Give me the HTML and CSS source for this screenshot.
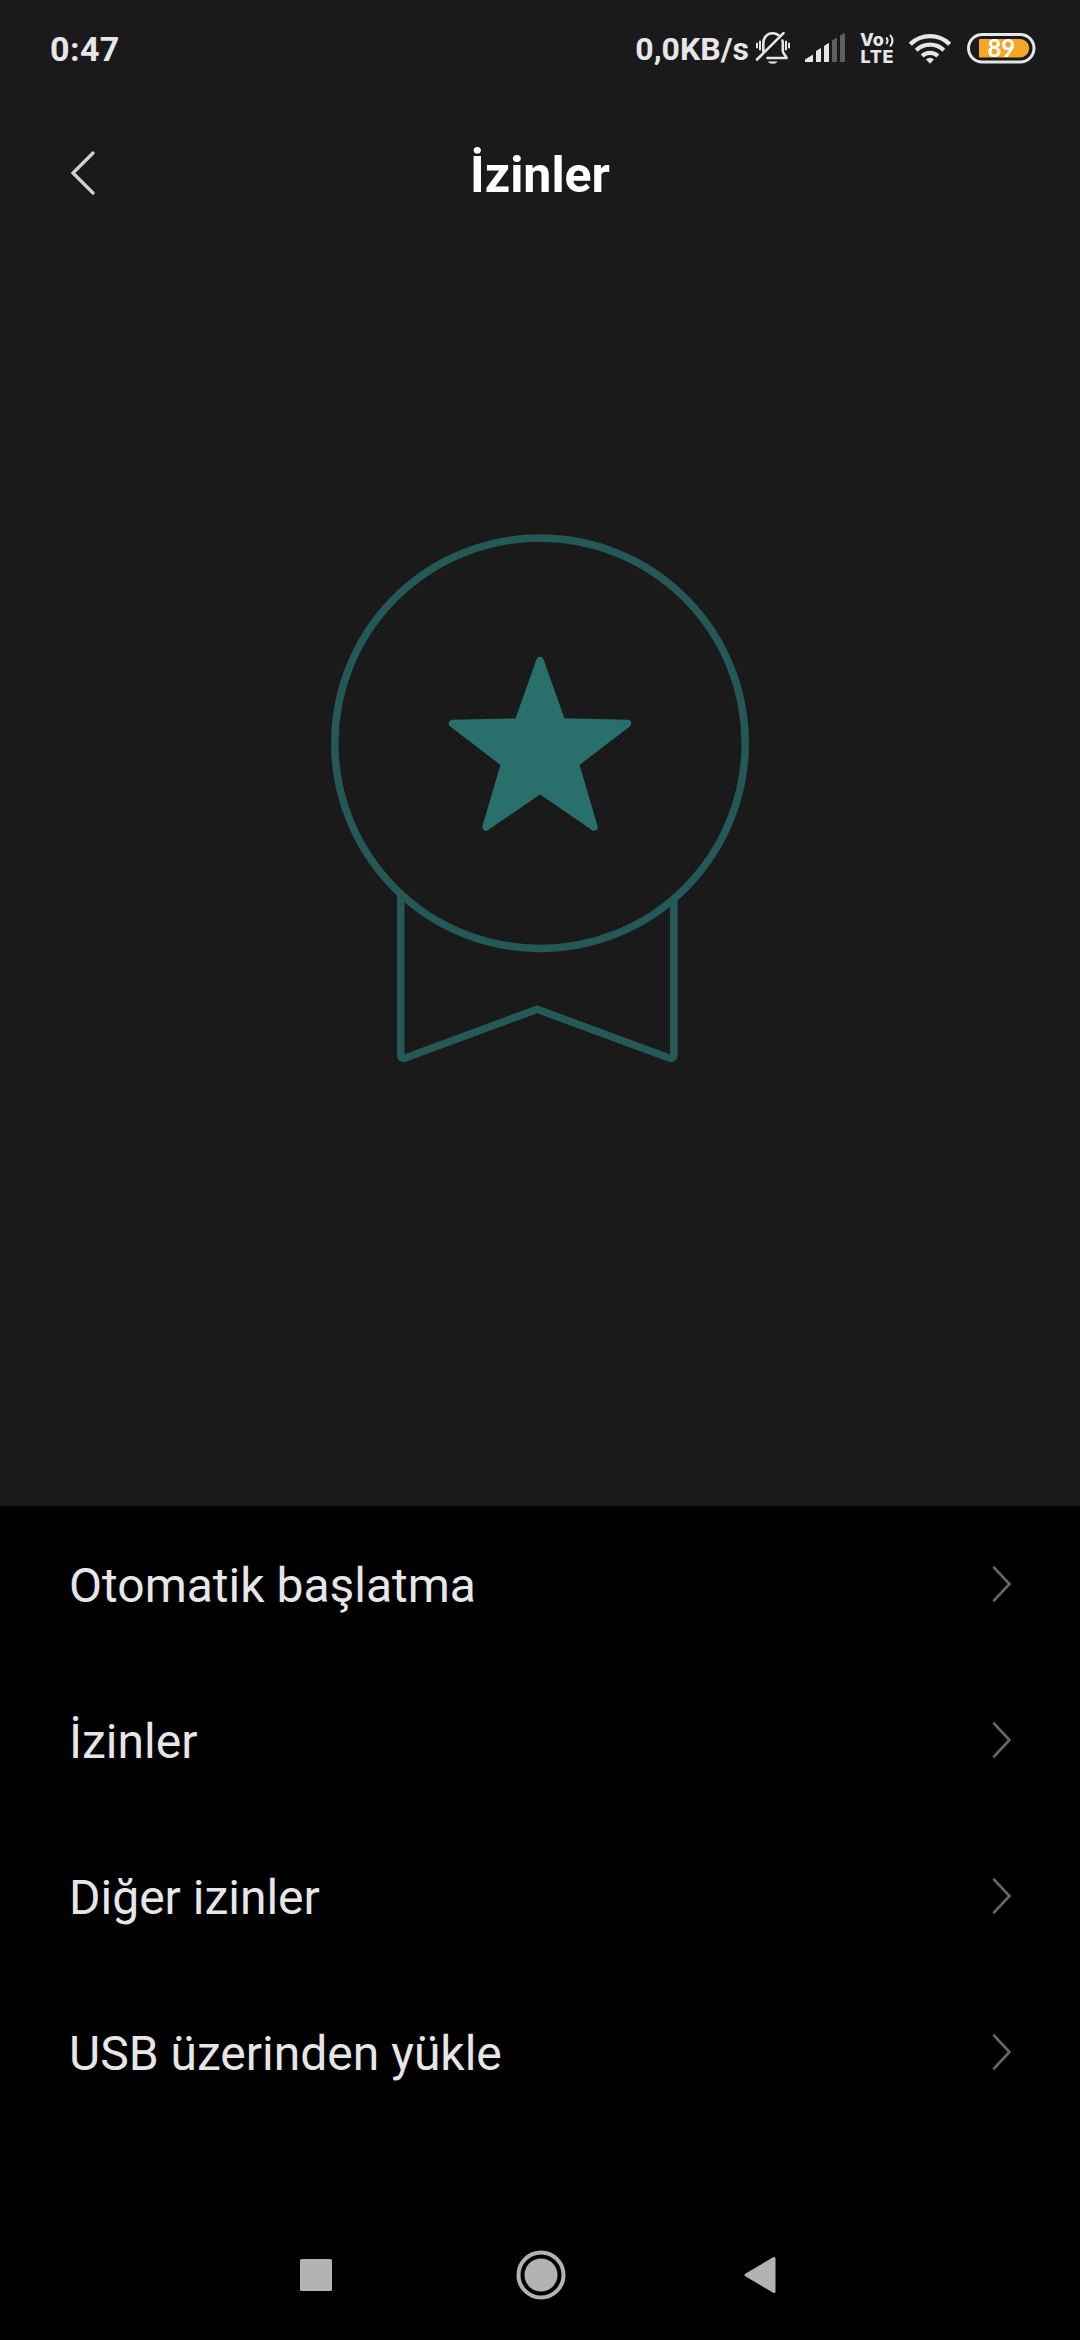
FILE: index.html
```html
<!DOCTYPE html>
<html lang="tr">
<head>
<meta charset="utf-8">
<title>İzinler</title>
<link rel="stylesheet" href="styles.css">
</head>
<body>
<div class="status">
  <span class="clock">0:47</span>
  <div class="indicators">
    <span class="speed">0,0KB/s</span>
    <svg class="bell" width="36" height="34" viewBox="0 0 36 34" fill="none" stroke="#e6e6e6" stroke-width="2.600" stroke-linecap="round" stroke-linejoin="round">
      <path d="M8.300 20V12.500C8.300 6.500 12 2.200 17.600 2.200c2.400 0 4.400.700 6 2M27.400 9.500c.3 1 .4 2 .4 3v7.500c0 2.400 2.800 4.500 3.800 7H12.500"/>
      <path d="M2 28.500 28.500 2.200"/>
      <path d="M2 12.500v4M5 10.500v8M31 10.500v8M34 12.500v4" stroke-width="2"/>
      <path d="M13 30.500h9.500c-1.200 3-8.300 3-9.500 0z" fill="#e6e6e6" stroke="none"/>
    </svg>
    <svg class="signal" width="41" height="30" viewBox="0 0 41 30">
      <g fill="#e6e6e6"><path d="M0 29v-2.500L8 21.500V29zM11 29V18l5-3v14zM19 29V13l5-3.200V29z"/></g>
      <g fill="#5f5f5f"><path d="M27 29V7.500l5-3V29zM35 29V2.500l5-2.500v29z"/></g>
    </svg>
    <svg class="volte" width="36" height="40" viewBox="0 -5 36 40">
      <text x="0" y="13.300" class="volte-text" textLength="24">Vo</text>
      <text x="0.500" y="30.300" class="volte-text" textLength="33">LTE</text>
      <path d="M26.700 5q1.700 2.700 0 5.300M30.500 2.500q4 5 0 10.300" fill="none" stroke="#e6e6e6" stroke-width="2" stroke-linecap="round"/>
    </svg>
    <svg class="wifi" width="42" height="31" viewBox="0 0 42 31" fill="none" stroke="#e6e6e6" stroke-width="4.200">
      <path d="M1.300 11.200a28 28 0 0 1 39.400 0M7.200 17.200a20 20 0 0 1 27.600 0M13.200 23a11.500 11.500 0 0 1 15.600 0"/>
      <path d="M17 26.500q4-3.500 8 0l-4 4.200z" fill="#e6e6e6" stroke="none"/>
    </svg>
    <svg class="battery" width="69" height="31" viewBox="0 0 69 31">
      <rect x="1.500" y="1.500" width="65.500" height="27.500" rx="13.750" fill="none" stroke="#e6e6e6" stroke-width="3"/>
      <path d="M13 6h40a9.200 9.200 0 0 1 0 18.500H13a1 1 0 0 1-1-1V7a1 1 0 0 1 1-1z" fill="#f5a623"/>
      <text x="34.300" y="24" text-anchor="middle" class="battery-text">89</text>
    </svg>
  </div>
</div>
<header class="header">
  <svg class="back" width="26" height="46" viewBox="0 0 26 46"><path d="M23 3 3 23l20 20" fill="none" stroke="#d0d0d0" stroke-width="3.300" stroke-linecap="round"/></svg>
  <h1 class="title">İzinler</h1>
</header>
<section class="hero">
  <svg width="420" height="530" viewBox="330 533 420 530">
    <g fill="none" stroke="#245957" stroke-width="7.500" stroke-linejoin="round">
      <circle cx="540" cy="743.200" r="205.200"/>
      <path d="M400.700 895v160q0 4.500 4.500 3L537.200 1009.300 669.300 1058q4.500 1.500 4.500-3V900"/>
    </g>
    <path d="M540 660.500 561.800 722 627.500 723.500 575.300 763.500 594 827 540 790 486 827 504.700 763.500 452.500 723.500 518.200 722z" fill="#29706c" stroke="#29706c" stroke-width="7.400" stroke-linejoin="round"/>
  </svg>
</section>
<main class="list">
  <div class="row"><span>Otomatik başlatma</span><svg class="chevron" width="20" height="38" viewBox="0 0 20 38"><path d="M2 2.500 17.500 19 2 35.500"/></svg></div>
  <div class="row"><span>İzinler</span><svg class="chevron" width="20" height="38" viewBox="0 0 20 38"><path d="M2 2.500 17.500 19 2 35.500"/></svg></div>
  <div class="row"><span>Diğer izinler</span><svg class="chevron" width="20" height="38" viewBox="0 0 20 38"><path d="M2 2.500 17.500 19 2 35.500"/></svg></div>
  <div class="row"><span>USB üzerinden yükle</span><svg class="chevron" width="20" height="38" viewBox="0 0 20 38"><path d="M2 2.500 17.500 19 2 35.500"/></svg></div>
</main>
<nav class="nav">
  <svg width="32" height="32" viewBox="0 0 32 32"><rect width="32" height="32" rx="1.500" fill="#b3b3b3"/></svg>
  <svg width="50" height="50" viewBox="0 0 50 50"><circle cx="25" cy="25" r="22.500" fill="none" stroke="#b3b3b3" stroke-width="4"/><circle cx="25" cy="25" r="16.500" fill="#b3b3b3"/></svg>
  <svg width="32" height="38" viewBox="0 0 32 38"><path d="M2 19 30 2.500v33z" fill="#b3b3b3" stroke="#b3b3b3" stroke-width="3" stroke-linejoin="round"/></svg>
</nav>
</body>
</html>
```
FILE: styles.css
```css
* { box-sizing: border-box; }
body {
  margin: 0;
  width: 1080px;
  height: 2340px;
  display: flex;
  flex-direction: column;
  background: #000;
  color: #e6e6e6;
  font-family: Roboto, sans-serif;
  overflow: hidden;
}
svg { display: block; flex: none; }
.status {
  height: 98px;
  padding: 0 44px 0 50px;
  display: flex;
  justify-content: space-between;
  background: #1a1a1a;
}
.clock {
  font-size: 34px;
  font-weight: 700;
  line-height: 40px;
  letter-spacing: 0.4px;
  padding-top: 29px;
}
.indicators { display: flex; align-items: flex-start; }
.speed {
  font-size: 32px;
  font-weight: 700;
  line-height: 38px;
  padding-top: 30px;
}
.bell { margin: 31px 0 0 6px; }
.signal { margin: 33px 0 0 14px; }
.volte { margin: 28px 0 0 14px; }
.wifi { margin: 33px 0 0 13px; }
.battery { margin: 33px 0 0 16px; }
.volte-text {
  font: 800 18px Inter, sans-serif;
  fill: #e6e6e6;
}
.battery-text {
  font: 700 24px Lato, sans-serif;
  fill: #fff;
}
.header {
  height: 152px;
  display: grid;
  grid-template-columns: 180px 1fr 180px;
  align-items: start;
  background: #1a1a1a;
}
.back { margin: 52px 0 0 70px; }
.title {
  margin: 47px 0 0;
  font-size: 50px;
  font-weight: 700;
  line-height: 60px;
  text-align: center;
  color: #fff;
}
.hero {
  height: 1256px;
  padding-top: 283px;
  display: flex;
  justify-content: center;
  align-items: flex-start;
  background: #1a1a1a;
}
.list { flex: 1; }
.row {
  height: 156px;
  padding: 0 68px 0 69px;
  display: flex;
  align-items: center;
  justify-content: space-between;
  font-size: 48px;
  line-height: 56px;
}
.row span { padding-top: 3px; }
.chevron {
  fill: none;
  stroke: #666;
  stroke-width: 2.6;
  stroke-linecap: round;
}
.nav {
  height: 130px;
  padding: 0 284px 0 280px;
  display: grid;
  grid-template-columns: 72px 1fr 72px;
  align-items: center;
  justify-items: center;
}
.nav svg:nth-child(2) { margin-left: 5px; }
```
